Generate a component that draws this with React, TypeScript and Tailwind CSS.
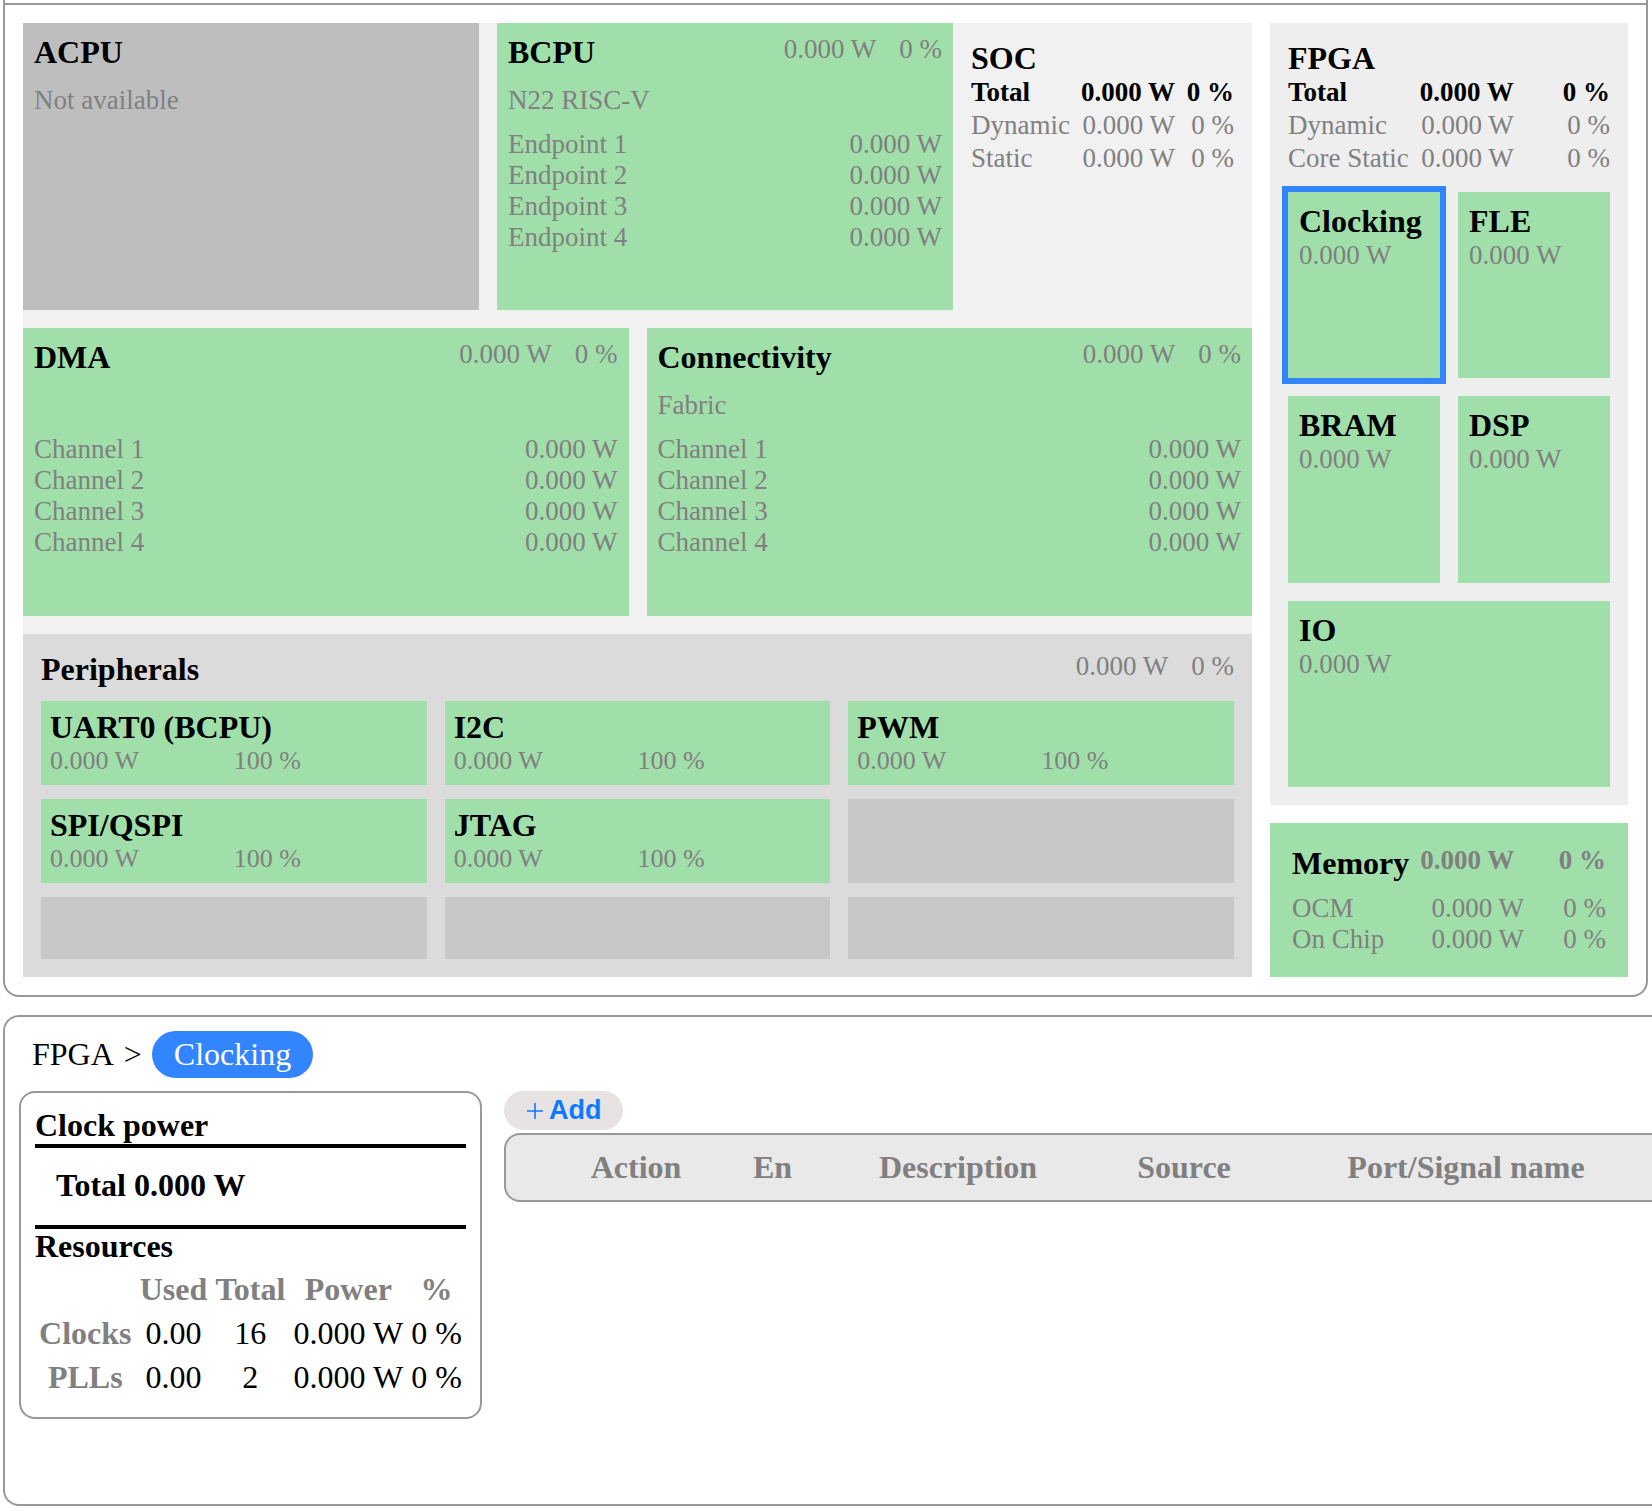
import { useState } from "react";

interface Row {
  label: string;
  power: string;
  percent?: string;
}

const endpoints: Row[] = [1, 2, 3, 4].map((n) => ({ label: `Endpoint ${n}`, power: "0.000 W" }));
const channels: Row[] = [1, 2, 3, 4].map((n) => ({ label: `Channel ${n}`, power: "0.000 W" }));

const socRows: Row[] = [
  { label: "Total", power: "0.000 W", percent: "0 %" },
  { label: "Dynamic", power: "0.000 W", percent: "0 %" },
  { label: "Static", power: "0.000 W", percent: "0 %" },
];

const fpgaRows: Row[] = [
  { label: "Total", power: "0.000 W", percent: "0 %" },
  { label: "Dynamic", power: "0.000 W", percent: "0 %" },
  { label: "Core Static", power: "0.000 W", percent: "0 %" },
];

const memoryRows: Row[] = [
  { label: "OCM", power: "0.000 W", percent: "0 %" },
  { label: "On Chip", power: "0.000 W", percent: "0 %" },
];

const peripherals = ["UART0 (BCPU)", "I2C", "PWM", "SPI/QSPI", "JTAG", "", "", "", ""];

const fpgaBlocks = ["Clocking", "FLE", "BRAM", "DSP", "IO"];

const resources = [
  { name: "Clocks", used: "0.00", total: 16, power: "0.000 W", percent: "0 %" },
  { name: "PLLs", used: "0.00", total: 2, power: "0.000 W", percent: "0 %" },
];

const title = "text-[32px] leading-[35px] font-bold text-black";

function HeaderValues() {
  return (
    <div className="flex gap-[23px] leading-[29px]">
      <span>0.000 W</span>
      <span>0 %</span>
    </div>
  );
}

function Block({ name, note, rows }: { name: string; note?: string; rows: Row[] }) {
  return (
    <section className="bg-[#a0dfaa] px-[11px] pt-3">
      <div className="flex items-start justify-between">
        <h2 className={title}>{name}</h2>
        <HeaderValues />
      </div>
      <p className="mt-[15px] mb-[13px] min-h-[31px]">{note}</p>
      <table className="w-full">
        <tbody>
          {rows.map((row) => (
            <tr key={row.label}>
              <td>{row.label}</td>
              <td className="text-right">{row.power}</td>
            </tr>
          ))}
        </tbody>
      </table>
    </section>
  );
}

function Summary({ name, rows }: { name: string; rows: Row[] }) {
  return (
    <>
      <h2 className={title}>{name}</h2>
      <table className="w-full leading-[33px] whitespace-nowrap">
        <tbody>
          {rows.map((row, i) => (
            <tr key={row.label} className={i === 0 ? "font-bold text-black" : ""}>
              <td className="w-px">{row.label}</td>
              <td className="w-px pl-[11px] text-right">{row.power}</td>
              <td className="pl-[11px] text-right">{row.percent}</td>
            </tr>
          ))}
        </tbody>
      </table>
    </>
  );
}

function Peripherals() {
  return (
    <section className="bg-[#dbdbdb] p-[18px]">
      <div className="flex items-start justify-between">
        <h2 className={title}>Peripherals</h2>
        <HeaderValues />
      </div>
      <div className="mt-[14px] grid grid-cols-3 gap-x-[18px] gap-y-[14px]">
        {peripherals.map((name, i) =>
          name ? (
            <div key={i} className="bg-[#a0dfaa] p-[9px]">
              <h3 className={title}>{name}</h3>
              <div className="grid grid-cols-2 text-[26px] leading-[31px]">
                <span>0.000 W</span>
                <span>100 %</span>
              </div>
            </div>
          ) : (
            <div key={i} className="min-h-[62px] bg-[#c9c7c8]" />
          )
        )}
      </div>
    </section>
  );
}

function Memory() {
  return (
    <section className="bg-[#a0dfaa] px-[22px] pt-[23px] pb-[22px]">
      <div className="flex items-start gap-[11px]">
        <h2 className={title}>Memory</h2>
        <span className="font-bold leading-[29px]">0.000 W</span>
        <span className="ml-auto font-bold leading-[29px]">0 %</span>
      </div>
      <table className="mt-3 w-full">
        <tbody>
          {memoryRows.map((row) => (
            <tr key={row.label}>
              <td>{row.label}</td>
              <td className="text-right">{row.power}</td>
              <td className="w-[82px] text-right">{row.percent}</td>
            </tr>
          ))}
        </tbody>
      </table>
    </section>
  );
}

function ClockPower() {
  return (
    <section className="w-[463px] shrink-0 rounded-2xl border-2 border-[#999] px-[14px] pt-[15px] pb-[18px] text-[32px] leading-[35px] text-black">
      <h2 className="border-b-4 border-black pb-px font-bold">Clock power</h2>
      <p className="border-b-4 border-black px-[21px] pt-5 pb-[22px] font-bold">Total 0.000 W</p>
      <h2 className="font-bold">Resources</h2>
      <table className="mt-[3px] w-full text-center whitespace-nowrap">
        <thead>
          <tr className="h-11 text-[#808080]">
            <th />
            <th className="px-1">Used</th>
            <th className="px-1">Total</th>
            <th className="px-1">Power</th>
            <th className="px-1">%</th>
          </tr>
        </thead>
        <tbody>
          {resources.map((item) => (
            <tr key={item.name} className="h-11">
              <th className="px-1 text-[#808080]">{item.name}</th>
              <td className="px-1">{item.used}</td>
              <td className="px-1">{item.total}</td>
              <td className="px-1">{item.power}</td>
              <td className="px-1">{item.percent}</td>
            </tr>
          ))}
        </tbody>
      </table>
    </section>
  );
}

function ClockTable() {
  return (
    <div className="min-w-0 flex-1">
      <button className="flex h-[39px] items-center gap-[5px] rounded-full bg-[#e7e3e3] px-[22px] font-['Liberation_Sans',sans-serif] text-[27px] font-bold text-[#0a7aff]">
        <svg className="h-[18px] w-[18px]" viewBox="0 0 18 18" fill="none" stroke="currentColor" strokeWidth={1.6}>
          <path d="M9 1v16M1 9h16" />
        </svg>
        Add
      </button>
      <div className="mt-[3px] overflow-hidden rounded-l-2xl border-2 border-r-0 border-[#999] bg-[#e9e9e9]">
        <table className="w-full table-fixed text-[32px] leading-[35px] whitespace-nowrap">
          <thead>
            <tr className="h-[65px]">
              <th className="w-[61px]" />
              <th className="w-[138px]">Action</th>
              <th className="w-[135px]">En</th>
              <th className="w-[236px]">Description</th>
              <th className="w-[216px]">Source</th>
              <th className="w-[348px]">Port/Signal name</th>
              <th />
            </tr>
          </thead>
        </table>
      </div>
    </div>
  );
}

export default function App() {
  const [selected, setSelected] = useState("Clocking");

  return (
    <div className="overflow-hidden bg-white pb-[5px] pl-[3px] font-['Liberation_Serif',serif] text-[27px] leading-[31px] text-[#808080]">
      <div className="mr-1 rounded-b-2xl border-2 border-t-0 border-[#999] pt-[3px]">
        <div className="flex gap-[18px] border-t-2 border-[#999] p-[18px]">
          {/* Processing side */}
          <div className="grid flex-1 grid-rows-[minmax(287px,auto)_minmax(288px,auto)_auto] gap-[18px] bg-[#f1f1f1]">
            <div className="grid grid-cols-[456fr_456fr_281fr] gap-[18px]">
              <section className="bg-[#bebebe] px-[11px] pt-3">
                <h2 className={title}>ACPU</h2>
                <p className="mt-[15px]">Not available</p>
              </section>
              <Block name="BCPU" note="N22 RISC-V" rows={endpoints} />
              <section className="min-w-0 pt-[18px] pr-[18px]">
                <Summary name="SOC" rows={socRows} />
              </section>
            </div>
            <div className="grid grid-cols-2 gap-[18px]">
              <Block name="DMA" rows={channels} />
              <Block name="Connectivity" note="Fabric" rows={channels} />
            </div>
            <Peripherals />
          </div>

          {/* Fabric side */}
          <div className="flex w-[358px] flex-col gap-[18px]">
            <section className="flex flex-1 flex-col bg-[#eee] p-[18px]">
              <Summary name="FPGA" rows={fpgaRows} />
              <div className="mt-[17px] grid flex-1 auto-rows-fr grid-cols-2 gap-[18px]">
                {fpgaBlocks.map((name) => (
                  <button
                    key={name}
                    onClick={() => setSelected(name)}
                    className={`flex flex-col items-start bg-[#a0dfaa] px-[11px] py-3 ${
                      name === "IO" ? "col-span-2" : ""
                    } ${name === selected ? "outline-6 outline-[#3385ff]" : ""}`}
                  >
                    <span className={title}>{name}</span>
                    <span className="leading-[33px]">0.000 W</span>
                  </button>
                ))}
              </div>
            </section>
            <Memory />
          </div>
        </div>
      </div>

      <div className="mt-[18px] rounded-l-2xl border-2 border-r-0 border-[#999] pt-[14px] pb-[85px] pl-[14px]">
        <nav className="flex items-center gap-[10px] pl-[13px] text-[32px] leading-[35px] text-black">
          <span>FPGA</span>
          <span>&gt;</span>
          <span className="rounded-3xl bg-[#3385ff] px-[22px] py-[6px] text-white">{selected}</span>
        </nav>
        <div className="mt-[13px] flex items-start gap-[22px]">
          <ClockPower />
          <ClockTable />
        </div>
      </div>
    </div>
  );
}
